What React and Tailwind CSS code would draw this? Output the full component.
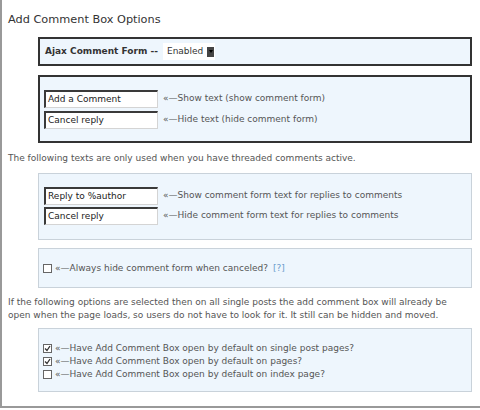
import React from 'react';

const font = { fontFamily: '"DejaVu Sans", Verdana, sans-serif' };

const TextInput = ({ value }) => (
  <div className="w-[114px] h-[18px] bg-white border border-t-2 border-l-2 border-t-[#3a3a3a] border-l-[#3a3a3a] border-b-[#d4d4d4] border-r-[#d4d4d4] pl-[2px] text-[9px] leading-[15px] text-[#222]">
    {value}
  </div>
);

const Row = ({ value, label }) => (
  <div className="flex items-center gap-[5px]">
    <TextInput value={value} />
    <span className="text-[9px] text-[#555]">«—{label}</span>
  </div>
);

const Check = ({ checked }) => (
  <span className="w-[9px] h-[9px] border border-[#666] bg-white flex items-center justify-center shrink-0">
    {checked && (
      <svg width="7" height="7" viewBox="0 0 7 7">
        <path d="M1 3.5 L3 5.5 L6 1" stroke="#333" strokeWidth="1.3" fill="none" />
      </svg>
    )}
  </span>
);

const CheckRow = ({ checked, label, children }) => (
  <div className="flex items-center gap-[3px] text-[9px] text-[#555] leading-[13px]">
    <Check checked={checked} />
    <span>«—{label}</span>
    {children}
  </div>
);

const App = () => {
  return (
    <div style={font} className="w-[480px] h-[410px] bg-white overflow-hidden">
      <div className="h-[408px] border-l-2 border-b-2 border-[#999] pt-[13px] pl-[6px] pr-[8px]">
        <h2 className="text-[11.3px] text-[#333] leading-[14px]">Add Comment Box Options</h2>

        <div className="ml-[30px] mt-[10px] h-[29px] border-2 border-[#333] bg-[#eef6fd] flex items-center pl-[5px] gap-[5px]">
          <span className="text-[9px] font-bold text-[#333]">Ajax Comment Form --</span>
          <div className="flex items-center bg-white h-[17px] w-[52px] pl-[4px] gap-[4px]">
            <span className="text-[9px] text-[#333]">Enabled</span>
            <span className="w-[7px] h-[10px] bg-[#444] flex items-center justify-center">
              <span className="w-0 h-0 border-l-[2px] border-r-[2px] border-t-[3px] border-l-transparent border-r-transparent border-t-black" />
            </span>
          </div>
        </div>

        <div className="ml-[30px] mt-[9px] h-[68px] border-2 border-[#333] bg-[#eef6fd] pl-[4px] pt-[13px] flex flex-col gap-[3px]">
          <Row value="Add a Comment" label="Show text (show comment form)" />
          <Row value="Cancel reply" label="Hide text (hide comment form)" />
        </div>

        <p className="mt-[9px] text-[9px] text-[#555] leading-[12px]">
          The following texts are only used when you have threaded comments active.
        </p>

        <div className="ml-[30px] mt-[9px] h-[67px] border border-[#c9d2da] bg-[#eef6fd] pl-[5px] pt-[13px] flex flex-col gap-[2px]">
          <Row value="Reply to %author" label="Show comment form text for replies to comments" />
          <Row value="Cancel reply" label="Hide comment form text for replies to comments" />
        </div>

        <div className="ml-[30px] mt-[8px] h-[40px] border border-[#c9d2da] bg-[#eef6fd] pl-[4px] flex items-center">
          <CheckRow label="Always hide comment form when canceled?">
            <span className="text-[#6a9ccc] ml-[2px]">[?]</span>
          </CheckRow>
        </div>

        <p className="mt-[8px] text-[9px] text-[#555] leading-[13px]">
          If the following options are selected then on all single posts the add comment box will already be open when the page loads, so users do not have to look for it. It still can be hidden and moved.
        </p>

        <div className="ml-[30px] mt-[6px] h-[64px] border border-[#c9d2da] bg-[#eef6fd] pl-[4px] pt-[13px] flex flex-col">
          <CheckRow checked label="Have Add Comment Box open by default on single post pages?" />
          <CheckRow checked label="Have Add Comment Box open by default on pages?" />
          <CheckRow label="Have Add Comment Box open by default on index page?" />
        </div>
      </div>
    </div>
  );
};

export default App;
